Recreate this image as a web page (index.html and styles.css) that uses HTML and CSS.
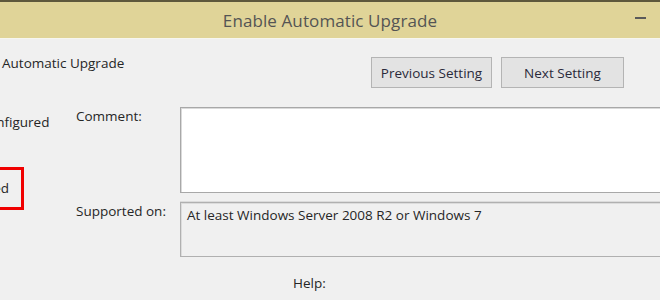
FILE: index.html
```html
<!DOCTYPE html>
<html lang="en">
<head>
    <meta charset="UTF-8">
    <title>Enable Automatic Upgrade</title>
    <link rel="stylesheet" href="styles.css">
</head>
<body>
    <div class="window">
        <div class="titlebar">
            <span></span>
            <span class="title">Enable Automatic Upgrade</span>
            <span class="controls"><span class="minimize"></span></span>
        </div>
        <div class="toolbar">
            <span class="setting-name">Automatic Upgrade</span>
            <div class="nav-buttons">
                <button class="btn">Previous Setting</button>
                <button class="btn">Next Setting</button>
            </div>
        </div>
        <div class="main">
            <div class="options">
                <div class="option opt-notconf">Not Configured</div>
                <div class="option opt-enabled">Enabled</div>
                <div class="highlight">
                    <div class="option opt-disabled">Disabled</div>
                </div>
            </div>
            <div class="fields">
                <label class="field-label">Comment:</label>
                <div class="comment-box"></div>
                <label class="field-label">Supported on:</label>
                <div class="supported-box">At least Windows Server 2008 R2 or Windows 7</div>
                <div class="help-row">Help:</div>
            </div>
        </div>
    </div>
</body>
</html>
```

FILE: styles.css
```css
body {
    margin: 0;
    font-family: 'Open Sans', 'Noto Sans', Arial, sans-serif;
    background: #f0f0f0;
}

.window {
    width: 660px;
    height: 300px;
    overflow: hidden;
    background: #f0f0f0;
    color: #262626;
    font-size: 13.5px;
}

.titlebar {
    height: 36px;
    border-top: 2px solid #5e583c;
    border-bottom: 1px solid #f6f6f0;
    background: #e0d498;
    display: grid;
    grid-template-columns: 1fr auto 1fr;
    align-items: center;
}

.title {
    font-size: 17px;
    color: #545454;
    letter-spacing: 0.1px;
}

.controls {
    display: flex;
    justify-content: flex-end;
    padding-right: 14px;
}

.minimize {
    width: 11px;
    height: 2px;
    background: #5a5a5a;
    margin-bottom: 4px;
}

.toolbar {
    height: 68px;
    display: flex;
    align-items: flex-start;
    justify-content: space-between;
}

.setting-name {
    margin-top: 15px;
    padding-left: 2px;
}

.nav-buttons {
    display: flex;
    gap: 9px;
    margin-top: 18px;
    margin-right: 36px;
}

.btn {
    font-family: inherit;
    font-size: 13.5px;
    color: #2a2a3a;
    background: #e3e3e3;
    border: 1px solid #b4b4b4;
    height: 31px;
    padding: 0;
}

.btn:first-child {
    width: 121px;
}

.btn:last-child {
    width: 123px;
}

.main {
    display: flex;
}

.options {
    width: 76px;
    flex-shrink: 0;
    padding-top: 5px;
    display: flex;
    flex-direction: column;
    gap: 13px;
    overflow: hidden;
}

.option {
    line-height: 20px;
    white-space: nowrap;
}

.opt-notconf {
    margin-left: -47px;
}

.opt-enabled {
    margin-left: -70px;
}

.highlight {
    margin-top: -11px;
    margin-left: -40px;
    width: 46px;
    padding: 8px 12px 9px 0;
    border: 3px solid #f00000;
    overflow: hidden;
    display: flex;
    justify-content: flex-end;
}

.fields {
    flex: 1;
    display: grid;
    grid-template-columns: 104px 1fr;
    grid-template-rows: 86px 55px auto;
    row-gap: 9px;
}

.comment-box {
    background: #ffffff;
    border: 1px solid #a8a8a8;
    border-right: none;
    box-shadow: inset 1px 1px 0 #dadada;
    margin-right: -10px;
}

.supported-box {
    border: 1px solid #b0b0b0;
    border-right: none;
    box-shadow: inset 1px 1px 0 #dcdcdc, 0 -1px 0 #dcdcdc;
    padding: 3px 6px;
    margin-right: -10px;
}

.help-row {
    grid-column: 2;
    padding: 8px 0 0 113px;
}
```
